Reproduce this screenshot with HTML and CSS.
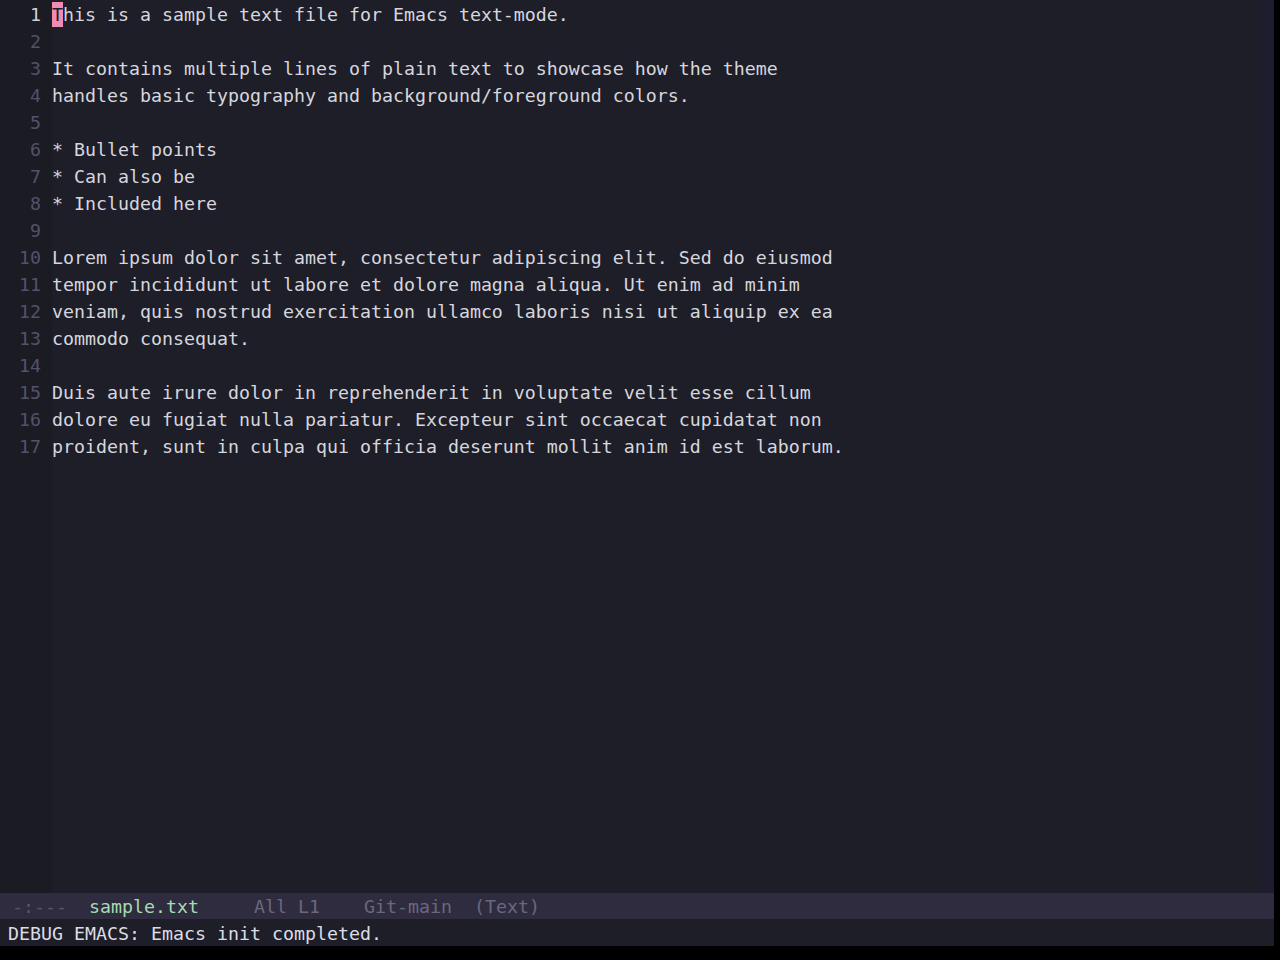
FILE: index.html
```html
<!DOCTYPE html>
<html lang="en">
<head>
  <meta charset="UTF-8" />
  <title>sample.txt - Emacs</title>
  <link rel="stylesheet" href="styles.css">
</head>
<body>
  <div class="frame">
    <div class="window">
      <div class="buffer">
        <div class="line current"><span class="num">1</span><span class="text"><span class="cursor">T</span>his is a sample text file for Emacs text-mode.</span></div>
        <div class="line"><span class="num">2</span><span class="text"></span></div>
        <div class="line"><span class="num">3</span><span class="text">It contains multiple lines of plain text to showcase how the theme</span></div>
        <div class="line"><span class="num">4</span><span class="text">handles basic typography and background/foreground colors.</span></div>
        <div class="line"><span class="num">5</span><span class="text"></span></div>
        <div class="line"><span class="num">6</span><span class="text">* Bullet points</span></div>
        <div class="line"><span class="num">7</span><span class="text">* Can also be</span></div>
        <div class="line"><span class="num">8</span><span class="text">* Included here</span></div>
        <div class="line"><span class="num">9</span><span class="text"></span></div>
        <div class="line"><span class="num">10</span><span class="text">Lorem ipsum dolor sit amet, consectetur adipiscing elit. Sed do eiusmod</span></div>
        <div class="line"><span class="num">11</span><span class="text">tempor incididunt ut labore et dolore magna aliqua. Ut enim ad minim</span></div>
        <div class="line"><span class="num">12</span><span class="text">veniam, quis nostrud exercitation ullamco laboris nisi ut aliquip ex ea</span></div>
        <div class="line"><span class="num">13</span><span class="text">commodo consequat.</span></div>
        <div class="line"><span class="num">14</span><span class="text"></span></div>
        <div class="line"><span class="num">15</span><span class="text">Duis aute irure dolor in reprehenderit in voluptate velit esse cillum</span></div>
        <div class="line"><span class="num">16</span><span class="text">dolore eu fugiat nulla pariatur. Excepteur sint occaecat cupidatat non</span></div>
        <div class="line"><span class="num">17</span><span class="text">proident, sunt in culpa qui officia deserunt mollit anim id est laborum.</span></div>
        <div class="filler"><span class="num"></span></div>
      </div>
      <div class="fringe"></div>
    </div>
    <div class="mode-line"><span class="ml-dim">-:---</span><span class="ml-buf">sample.txt</span><span class="ml-pos">All L1</span><span class="ml-vc">Git-main</span><span class="ml-mode">(Text)</span></div>
    <div class="echo">DEBUG EMACS: Emacs init completed.</div>
  </div>
</body>
</html>
```

FILE: styles.css
```css
body {
  margin: 0;
  background: #000000;
  font-family: 'DejaVu Sans Mono', monospace;
  font-size: 18.27px;
}
.frame {
  width: 1274px;
  height: 946px;
  display: flex;
  flex-direction: column;
  background: #1e1e28;
  color: #d6d6de;
}
.window {
  flex: 1;
  display: flex;
  min-height: 0;
}
.buffer {
  flex: 1;
  display: flex;
  flex-direction: column;
}
.line {
  display: flex;
  height: 27px;
  line-height: 27px;
  white-space: pre;
}
.line:first-child {
  height: 28px;
  padding-top: 1px;
  box-sizing: border-box;
}
.num {
  width: 41px;
  padding-right: 11px;
  text-align: right;
  color: #52526a;
  background: #1b1b24;
  flex-shrink: 0;
}
.line:first-child .num {
  margin-top: -1px;
  padding-top: 1px;
}
.current .num {
  color: #d0d0d8;
}
.cursor {
  background: #f08cb4;
  color: #1e1e28;
  display: inline-block;
  line-height: 25px;
  margin-top: 1px;
}
.filler {
  flex: 1;
  display: flex;
}
.fringe {
  width: 12px;
  background: #1e1d30;
}
.mode-line {
  height: 26px;
  line-height: 28px;
  background: #2f2c40;
  color: #6a687e;
  padding-left: 12px;
  white-space: pre;
  overflow: hidden;
}
.ml-dim {
  color: #57556b;
}
.ml-buf {
  color: #a6dcb0;
  margin-left: 22px;
}
.ml-pos {
  margin-left: 55px;
}
.ml-vc {
  margin-left: 44px;
}
.ml-mode {
  margin-left: 22px;
}
.echo {
  height: 27px;
  line-height: 29px;
  padding-left: 8px;
  color: #dcdce4;
  background: #1e1e28;
  overflow: hidden;
}
```
